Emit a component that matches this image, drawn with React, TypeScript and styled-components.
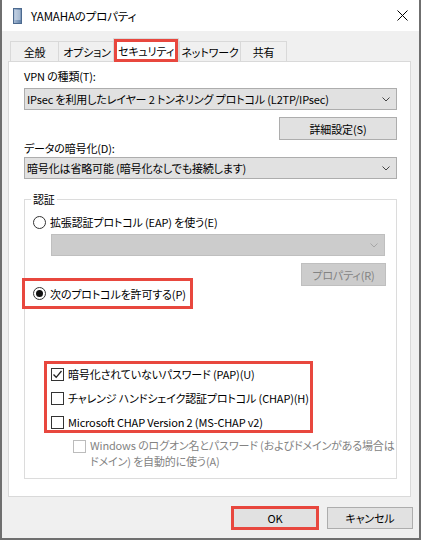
import * as React from 'react'
import styled, { createGlobalStyle } from 'styled-components'

const RED = '#e8473e'

const GlobalStyle = createGlobalStyle`
  html,
  body {
    margin: 0;
    padding: 0;
    background: #fff;
  }
  body {
    font-family: 'Noto Sans CJK JP', 'Noto Sans', sans-serif;
    font-size: 11px;
    font-feature-settings: 'palt';
    letter-spacing: -0.15px;
    color: #000;
  }
  * {
    box-sizing: border-box;
  }
`

const StyledWindow = styled.div`
  width: 421px;
  height: 540px;
  display: flex;
  flex-direction: column;
  border: 2px solid #6f6f6f;
  border-top: none;
  background: #f0f0f0;
`

const StyledTitleBar = styled.header`
  height: 31px;
  flex: none;
  display: flex;
  align-items: center;
  padding: 0 11px 0 11px;
  background: #fff;

  > span {
    margin-left: 9px;
    line-height: 16px;
    font-size: 11.5px;
  }
  > svg:last-child {
    margin-left: auto;
  }
`

const StyledBody = styled.div`
  flex: 1;
  display: flex;
  flex-direction: column;
  padding: 10px 8px 0 6px;
`

const StyledTabStrip = styled.nav`
  display: flex;
  height: 20px;
  padding-left: 2px;
`

type TabProps = { $active?: boolean; $w: number }

const StyledTab = styled.div<TabProps>`
  width: ${(p) => p.$w}px;
  height: ${(p) => (p.$active ? 24 : 20)}px;
  margin: ${(p) => (p.$active ? '-3px 0 0 -2px' : '0 -1px 0 0')};
  align-self: flex-start;
  display: flex;
  align-items: center;
  justify-content: center;
  border: 1px solid #d9d9d9;
  border-bottom: none;
  background: ${(p) => (p.$active ? '#fff' : '#f0f0f0')};
  box-shadow: ${(p) => (p.$active ? `inset 0 0 0 3px ${RED}` : 'none')};
  position: ${(p) => (p.$active ? 'relative' : 'static')};
  z-index: ${(p) => (p.$active ? 1 : 'auto')};
  padding-top: ${(p) => (p.$active ? '1px' : '0')};
  white-space: nowrap;
`

const StyledPanel = styled.section`
  height: 436px;
  flex: none;
  display: flex;
  flex-direction: column;
  padding: 6px 13px 0 15px;
  background: #fff;
  border: 1px solid #d9d9d9;
`

const StyledFieldLabel = styled.div`
  height: 16px;
  line-height: 16px;
`

type ComboProps = { $disabled?: boolean; $mt: number }

const StyledCombo = styled.div<ComboProps>`
  height: 22px;
  margin-top: ${(p) => p.$mt}px;
  display: flex;
  align-items: center;
  padding: 0 6px 0 2px;
  border: 1px solid ${(p) => (p.$disabled ? '#bfbfbf' : '#adadad')};
  background: ${(p) => (p.$disabled ? '#cccccc' : '#e1e1e1')};
  color: ${(p) => (p.$disabled ? '#838383' : '#000')};

  > span {
    flex: 1;
    overflow: hidden;
    white-space: nowrap;
    line-height: 16px;
  }
  > svg {
    flex: none;
  }
`

const StyledButtonRow = styled.div<{ $mt: number; $spread?: boolean }>`
  display: flex;
  justify-content: ${(p) => (p.$spread ? 'space-between' : 'flex-end')};
  align-items: flex-start;
  margin-top: ${(p) => p.$mt}px;
`

type ButtonProps = { $w: number; $h?: number; $highlight?: boolean }

const StyledPushButton = styled.button<ButtonProps>`
  width: ${(p) => p.$w}px;
  height: ${(p) => p.$h ?? 23}px;
  padding: 0;
  font: inherit;
  font-feature-settings: 'palt';
  letter-spacing: inherit;
  line-height: 16px;
  color: #000;
  background: #e1e1e1;
  border: 1px solid #adadad;
  border-radius: 0;
  outline: ${(p) => (p.$highlight ? `3px solid ${RED}` : 'none')};
  outline-offset: -2px;

  &:disabled {
    color: #838383;
    background: #cccccc;
    border-color: #bfbfbf;
  }
`

const StyledGroupBox = styled.fieldset`
  margin: 12px 0 0 0;
  padding: 0 11px 9px 8px;
  min-width: 0;
  border: 1px solid #dcdcdc;
  display: flex;
  flex-direction: column;

  > legend {
    padding: 0 2px;
    margin-left: -2px;
    line-height: 16px;
  }
`

const StyledOptionRow = styled.label<{ $disabled?: boolean }>`
  display: flex;
  align-items: ${(p) => (p.$disabled ? 'flex-start' : 'center')};
  gap: 4px;
  min-height: 16px;
  line-height: 16px;
  white-space: nowrap;
  color: ${(p) => (p.$disabled ? '#838383' : '#000')};
`

const StyledRadio = styled.span<{ $checked?: boolean }>`
  width: 13px;
  height: 13px;
  flex: none;
  border: 1px solid #333;
  border-radius: 50%;
  background: #fff;
  display: flex;
  align-items: center;
  justify-content: center;

  &::after {
    content: '';
    display: ${(p) => (p.$checked ? 'block' : 'none')};
    width: 7px;
    height: 7px;
    border-radius: 50%;
    background: #111;
  }
`

const StyledCheckBox = styled.span<{ $disabled?: boolean }>`
  width: 13px;
  height: 13px;
  flex: none;
  margin-top: ${(p) => (p.$disabled ? '3px' : '0')};
  border: 1px solid ${(p) => (p.$disabled ? '#bcbcbc' : '#333')};
  background: #fff;
  display: flex;
`

const StyledHighlight = styled.div<{ $w: number; $column?: boolean }>`
  width: ${(p) => p.$w}px;
  border: 3px solid ${RED};
  display: flex;
  flex-direction: ${(p) => (p.$column ? 'column' : 'row')};
`

const StyledRadioHighlight = styled(StyledHighlight)`
  height: 31px;
  margin: 15px 0 0 -11px;
  padding-left: 8px;
  align-items: center;
`

const StyledCheckHighlight = styled(StyledHighlight)`
  margin: 52px 0 0 11px;
  padding: 2px 0 0 4px;
  gap: 8px;
`

const StyledFooter = styled.footer`
  display: flex;
  justify-content: flex-end;
  gap: 9px;
  margin: 10px -2px 0 0;
`

const Chevron = ({ color = '#444' }: { color?: string }) => (
  <svg width="8" height="5" viewBox="0 0 8 5">
    <polyline points="0.5,0.5 4,4 7.5,0.5" fill="none" stroke={color} strokeWidth="1" />
  </svg>
)

const Check = () => (
  <svg width="11" height="11" viewBox="0 0 11 11">
    <polyline points="1.5,5.5 4.2,8.3 9.5,2" fill="none" stroke="#222" strokeWidth="1.3" />
  </svg>
)

const ServerIcon = () => (
  <svg width="9" height="16" viewBox="0 0 9 16">
    <defs>
      <linearGradient id="srv" x1="0" x2="1" y1="0" y2="0">
        <stop offset="0" stopColor="#a9bdd6" />
        <stop offset="1" stopColor="#5c7ca4" />
      </linearGradient>
    </defs>
    <rect x="0.5" y="0.5" width="8" height="15" fill="url(#srv)" stroke="#4d6a8f" />
    {[3, 5, 7, 9, 11].map((y) => (
      <line key={y} x1="1.5" x2="7.5" y1={y} y2={y} stroke="#e4ecf6" strokeWidth="1" />
    ))}
  </svg>
)

const CloseIcon = () => (
  <svg width="11" height="11" viewBox="0 0 11 11">
    <path d="M0.5 0.5 L10.5 10.5 M10.5 0.5 L0.5 10.5" stroke="#000" strokeWidth="1" />
  </svg>
)

const TABS = ['全般', 'オプション', 'セキュリティ', 'ネットワーク', '共有']
const TAB_WIDTHS = [49, 58, 66, 62, 47]

const CHECKS = [
  { text: '暗号化されていないパスワード (PAP)(U)', checked: true },
  { text: 'チャレンジ ハンドシェイク認証プロトコル (CHAP)(H)', checked: false },
  { text: 'Microsoft CHAP Version 2 (MS-CHAP v2)', checked: false },
]

export default () => (
  <>
    <GlobalStyle />
    <StyledWindow>
      <StyledTitleBar>
        <ServerIcon />
        <span>YAMAHAのプロパティ</span>
        <CloseIcon />
      </StyledTitleBar>
      <StyledBody>
        <StyledTabStrip>
          {TABS.map((t, i) => (
            <StyledTab key={t} $w={TAB_WIDTHS[i]} $active={i === 2}>
              {t}
            </StyledTab>
          ))}
        </StyledTabStrip>
        <StyledPanel>
          <StyledFieldLabel>VPN の種類(T):</StyledFieldLabel>
          <StyledCombo $mt={4}>
            <span>IPsec を利用したレイヤー 2 トンネリング プロトコル (L2TP/IPsec)</span>
            <Chevron />
          </StyledCombo>
          <StyledButtonRow $mt={7}>
            <StyledPushButton $w={118}>詳細設定(S)</StyledPushButton>
          </StyledButtonRow>
          <StyledFieldLabel>データの暗号化(D):</StyledFieldLabel>
          <StyledCombo $mt={1}>
            <span>暗号化は省略可能 (暗号化なしでも接続します)</span>
            <Chevron />
          </StyledCombo>

          <StyledGroupBox>
            <legend>認証</legend>
            <StyledOptionRow style={{ marginTop: 7 }}>
              <StyledRadio />
              拡張認証プロトコル (EAP) を使う(E)
            </StyledOptionRow>
            <StyledCombo $mt={4} $disabled style={{ marginLeft: 18 }}>
              <span />
              <Chevron color="#a6a6a6" />
            </StyledCombo>
            <StyledButtonRow $mt={7} $spread>
              <StyledRadioHighlight $w={171}>
                <StyledOptionRow>
                  <StyledRadio $checked />
                  次のプロトコルを許可する(P)
                </StyledOptionRow>
              </StyledRadioHighlight>
              <StyledPushButton $w={85} disabled style={{ marginRight: -1 }}>
                プロパティ(R)
              </StyledPushButton>
            </StyledButtonRow>
            <StyledCheckHighlight $w={269} $column>
              {CHECKS.map((c) => (
                <StyledOptionRow key={c.text}>
                  <StyledCheckBox>{c.checked && <Check />}</StyledCheckBox>
                  {c.text}
                </StyledOptionRow>
              ))}
            </StyledCheckHighlight>
            <StyledOptionRow $disabled style={{ marginTop: 4, marginLeft: 40 }}>
              <StyledCheckBox $disabled />
              <span>
                Windows のログオン名とパスワード (およびドメインがある場合は
                <br />
                ドメイン) を自動的に使う(A)
              </span>
            </StyledOptionRow>
          </StyledGroupBox>
        </StyledPanel>
        <StyledFooter>
          <StyledPushButton $w={86} $h={22} $highlight>
            OK
          </StyledPushButton>
          <StyledPushButton $w={86} $h={22}>
            キャンセル
          </StyledPushButton>
        </StyledFooter>
      </StyledBody>
    </StyledWindow>
  </>
)
